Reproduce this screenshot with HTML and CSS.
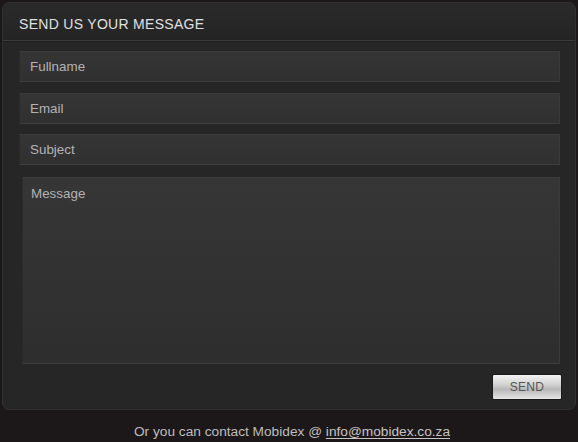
FILE: index.html
```html
<!DOCTYPE html>
<html>
<head>
<meta charset="utf-8">
<link rel="stylesheet" href="styles.css">
</head>
<body>
<div class="panel">
  <div class="panel-head">SEND US YOUR MESSAGE</div>
  <form class="form">
    <input class="field" type="text" placeholder="Fullname">
    <input class="field" type="text" placeholder="Email">
    <input class="field" type="text" placeholder="Subject">
    <textarea class="field area" placeholder="Message"></textarea>
    <div class="actions"><button type="button" class="send">SEND</button></div>
  </form>
</div>
<p class="contact">Or you can contact Mobidex @ <a href="#">info@mobidex.co.za</a></p>
</body>
</html>
```

FILE: styles.css
```css
html, body { margin: 0; padding: 0; }
body {
  background: #1c1819;
  font-family: "Liberation Sans", Arial, sans-serif;
  width: 578px;
  height: 442px;
  overflow: hidden;
  padding-top: 2px;
  box-sizing: border-box;
}
.panel {
  margin: 0 2px 0 2px;
  height: 408px;
  box-sizing: border-box;
  background: #262626;
  border: 1px solid #313131;
  border-radius: 7px;
  display: flex;
  flex-direction: column;
}
.panel-head {
  height: 38px;
  box-sizing: border-box;
  padding: 13px 0 0 16px;
  color: #e0e0e0;
  font-size: 14px;
  letter-spacing: 0.3px;
  border-bottom: 1px solid #3a3a3a;
  box-shadow: 0 1px 0 #1e1e1e;
  background: linear-gradient(#2a2a2a, #242424);
  border-radius: 6px 6px 0 0;
}
.form {
  display: flex;
  flex-direction: column;
  padding: 10px 15px 0 16px;
}
.field {
  display: block;
  height: 31px;
  box-sizing: border-box;
  margin: 0 0 10.5px 0;
  padding: 0 10px;
  background: linear-gradient(#353535, #303030);
  border: 1px solid #2a2a2a;
  border-right-color: #3a3a3a;
  border-bottom-color: #3d3d3d;
  border-top-color: #3a3a3a;
  color: #bbb;
  font-family: "Liberation Sans", Arial, sans-serif;
  font-size: 13.4px;
  outline: none;
}
.field::placeholder { color: #b3b3b3; opacity: 1; }
.area {
  margin: 1px 0 0 3px;
  height: 187px;
  resize: none;
  padding: 8px 8px;
  background: linear-gradient(#363636, #2e2e2e);
}
.actions {
  display: flex;
  justify-content: flex-end;
  padding-top: 10px;
  margin-right: -2px;
}
.send {
  width: 70px;
  height: 26px;
  box-sizing: border-box;
  border: 1px solid #1a1a1a;
  border-radius: 2px;
  background: linear-gradient(#f4f4f4 0%, #d2d2d2 40%, #b8b8b8 60%, #e6e6e6 100%);
  color: #555;
  font-family: "Liberation Sans", Arial, sans-serif;
  font-size: 12px;
  padding: 1px 0 0 0;
  letter-spacing: 0.3px;
}
.contact {
  margin: 14px 0 0 0;
  padding-left: 6px;
  text-align: center;
  color: #bdbdbd;
  font-size: 13.7px;
}
.contact a { color: #c4c4c4; text-decoration: underline; text-underline-offset: 2px; }
```
